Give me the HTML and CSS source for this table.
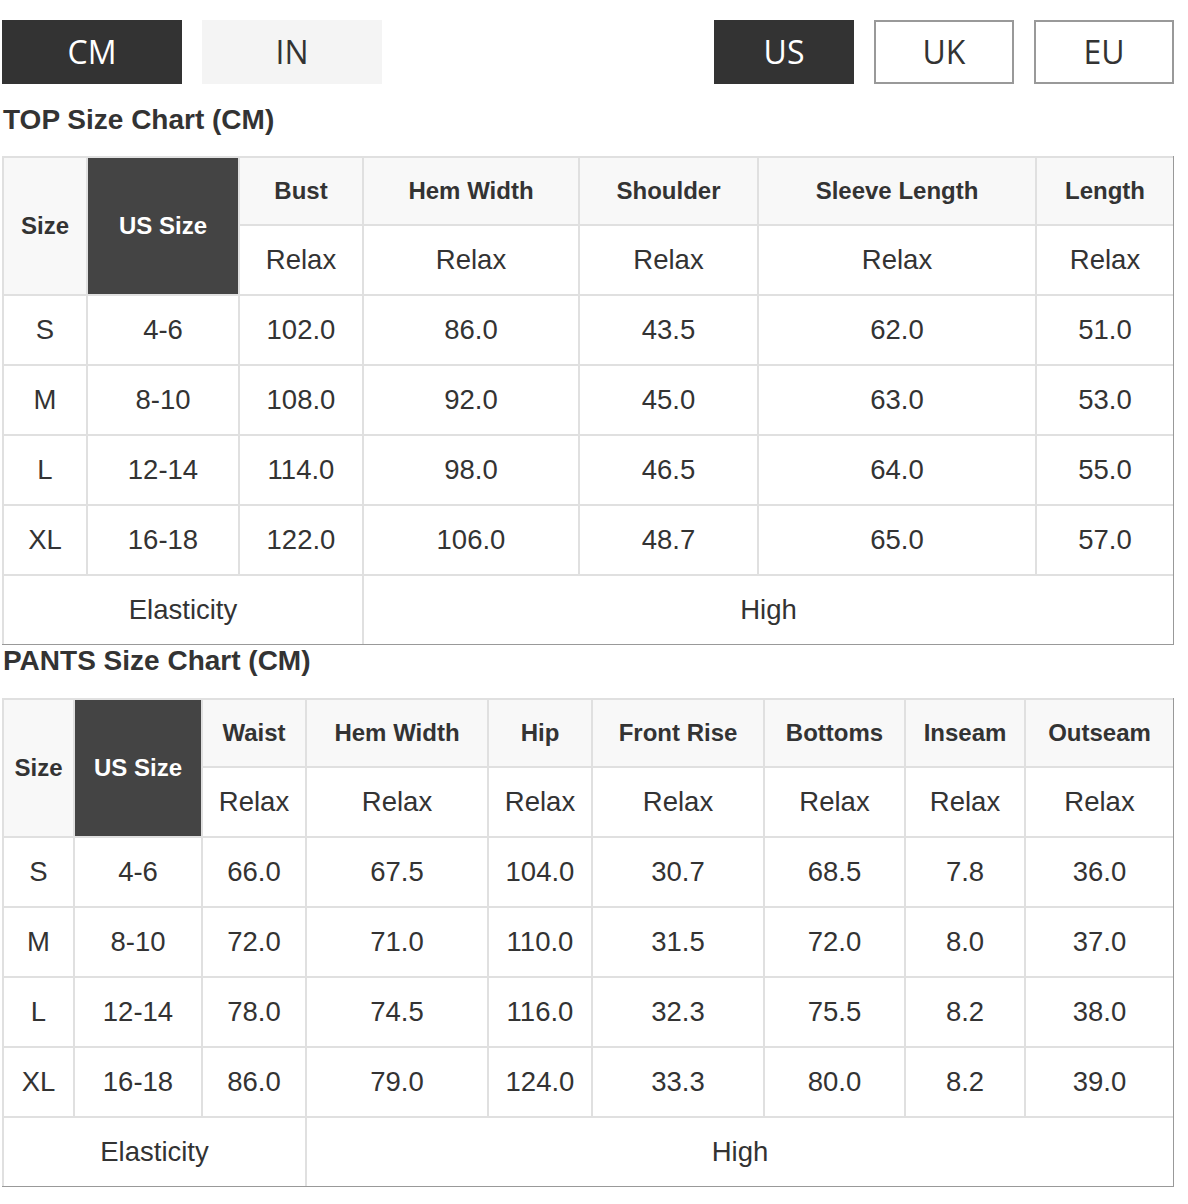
FILE: index.html
```html
<!DOCTYPE html>
<html lang="en">
<head>
<meta charset="utf-8">
<title>Size Chart</title>
<link rel="stylesheet" href="styles.css">
</head>
<body>
<div class="page">
  <div class="units">
    <div class="unit-group">
      <button class="unit-btn unit-wide is-active">CM</button>
      <button class="unit-btn unit-wide is-muted">IN</button>
    </div>
    <div class="unit-group">
      <button class="unit-btn unit-narrow is-active">US</button>
      <button class="unit-btn unit-narrow is-outline">UK</button>
      <button class="unit-btn unit-narrow is-outline">EU</button>
    </div>
  </div>

  <h2 class="chart-title title-top">TOP Size Chart (CM)</h2>
  <table class="chart">
    <colgroup>
      <col class="c-84"><col class="c-152"><col class="c-124"><col class="c-216"><col class="c-179"><col class="c-278"><col class="c-138">
    </colgroup>
    <thead>
      <tr class="head">
        <th rowspan="2" class="h-size">Size</th>
        <th rowspan="2" class="h-us">US Size</th>
        <th>Bust</th><th>Hem Width</th><th>Shoulder</th><th>Sleeve Length</th><th>Length</th>
      </tr>
      <tr class="sub">
        <td>Relax</td><td>Relax</td><td>Relax</td><td>Relax</td><td>Relax</td>
      </tr>
    </thead>
    <tbody>
      <tr><td>S</td><td>4-6</td><td>102.0</td><td>86.0</td><td>43.5</td><td>62.0</td><td>51.0</td></tr>
      <tr><td>M</td><td>8-10</td><td>108.0</td><td>92.0</td><td>45.0</td><td>63.0</td><td>53.0</td></tr>
      <tr><td>L</td><td>12-14</td><td>114.0</td><td>98.0</td><td>46.5</td><td>64.0</td><td>55.0</td></tr>
      <tr><td>XL</td><td>16-18</td><td>122.0</td><td>106.0</td><td>48.7</td><td>65.0</td><td>57.0</td></tr>
      <tr><td colspan="3">Elasticity</td><td colspan="4">High</td></tr>
    </tbody>
  </table>

  <h2 class="chart-title title-pants">PANTS Size Chart (CM)</h2>
  <table class="chart">
    <colgroup>
      <col class="c-71"><col class="c-128"><col class="c-104"><col class="c-182"><col class="c-104"><col class="c-172"><col class="c-141"><col class="c-120"><col class="c-149">
    </colgroup>
    <thead>
      <tr class="head">
        <th rowspan="2" class="h-size">Size</th>
        <th rowspan="2" class="h-us">US Size</th>
        <th>Waist</th><th>Hem Width</th><th>Hip</th><th>Front Rise</th><th>Bottoms</th><th>Inseam</th><th>Outseam</th>
      </tr>
      <tr class="sub">
        <td>Relax</td><td>Relax</td><td>Relax</td><td>Relax</td><td>Relax</td><td>Relax</td><td>Relax</td>
      </tr>
    </thead>
    <tbody>
      <tr><td>S</td><td>4-6</td><td>66.0</td><td>67.5</td><td>104.0</td><td>30.7</td><td>68.5</td><td>7.8</td><td>36.0</td></tr>
      <tr><td>M</td><td>8-10</td><td>72.0</td><td>71.0</td><td>110.0</td><td>31.5</td><td>72.0</td><td>8.0</td><td>37.0</td></tr>
      <tr><td>L</td><td>12-14</td><td>78.0</td><td>74.5</td><td>116.0</td><td>32.3</td><td>75.5</td><td>8.2</td><td>38.0</td></tr>
      <tr><td>XL</td><td>16-18</td><td>86.0</td><td>79.0</td><td>124.0</td><td>33.3</td><td>80.0</td><td>8.2</td><td>39.0</td></tr>
      <tr><td colspan="3">Elasticity</td><td colspan="6">High</td></tr>
    </tbody>
  </table>
</div>
</body>
</html>
```
FILE: styles.css
```css
html, body {
  margin: 0;
  padding: 0;
  background: #fff;
}

.page {
  width: 1172px;
  padding: 20px 0 0 2px;
  font-family: "Liberation Sans", Arial, sans-serif;
  color: #333;
}

.units {
  display: flex;
  justify-content: space-between;
}

.unit-group {
  display: flex;
  gap: 20px;
}

.unit-btn {
  box-sizing: border-box;
  height: 64px;
  margin: 0;
  padding: 0;
  border: 0;
  font-family: "Open Sans", sans-serif;
  font-size: 32px;
  font-weight: normal;
  line-height: 64px;
  color: #333;
  background: #fff;
  cursor: pointer;
}

.unit-wide { width: 180px; }
.unit-narrow { width: 140px; }

.is-active {
  background: #333;
  color: #fff;
}

.is-muted {
  background: #f4f4f4;
}

.is-outline {
  border: 2px solid #999;
  line-height: 60px;
}

.chart-title {
  margin: 0;
  font-size: 28px;
  line-height: 32px;
  font-weight: bold;
  color: #333;
}

.title-top {
  padding: 20px 0 20px 1px;
}

.title-pants {
  padding: 0 0 21px 1px;
}

.chart {
  width: 1172px;
  table-layout: fixed;
  border-collapse: separate;
  border-spacing: 0;
  border-right: 1px solid #999;
  border-bottom: 1px solid #999;
}

.chart th,
.chart td {
  padding: 0;
  border-left: 2px solid #e0e0e0;
  border-top: 2px solid #e0e0e0;
  text-align: center;
  vertical-align: middle;
  font-size: 27.5px;
  font-weight: normal;
  color: #333;
  background: #fff;
}

.chart tr {
  height: 70px;
}

.chart tr.head {
  height: 68px;
}

.chart th {
  font-size: 24px;
  font-weight: bold;
}

.chart .head th {
  background: #f8f8f8;
}

.chart .head th.h-us {
  background: #444;
  color: #fff;
}

.c-71 { width: 71px; }
.c-84 { width: 84px; }
.c-104 { width: 104px; }
.c-120 { width: 120px; }
.c-124 { width: 124px; }
.c-128 { width: 128px; }
.c-138 { width: 138px; }
.c-141 { width: 141px; }
.c-149 { width: 149px; }
.c-152 { width: 152px; }
.c-172 { width: 172px; }
.c-179 { width: 179px; }
.c-182 { width: 182px; }
.c-216 { width: 216px; }
.c-278 { width: 278px; }
```
